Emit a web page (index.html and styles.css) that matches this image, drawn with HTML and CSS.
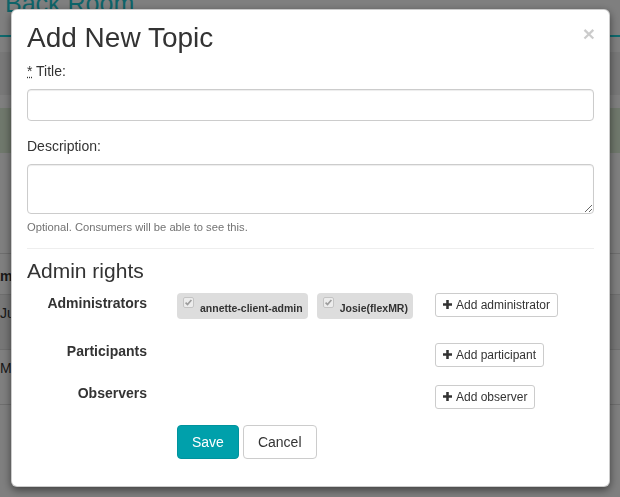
FILE: index.html
```html
<!DOCTYPE html>
<html lang="en">
<head>
    <meta charset="UTF-8">
    <meta name="viewport" content="width=device-width, initial-scale=1.0">
    <title>Back Room - Add New Topic</title>
    <link rel="stylesheet" href="styles.css">
</head>
<body>
    <div class="page">
        <h1 class="page-title">Back Room</h1>
        <div class="page-rule"></div>
        <div class="breadcrumb-bar"></div>
        <div class="notice"></div>
        <table class="topics">
            <thead>
                <tr><th><span class="cut">Name</span></th><th>Created</th></tr>
            </thead>
            <tbody>
                <tr class="striped"><td>June topic</td><td></td></tr>
                <tr><td>March topic</td><td></td></tr>
            </tbody>
        </table>
    </div>

    <div class="backdrop"></div>

    <div class="modal">
        <div class="modal-dialog">
            <div class="modal-header">
                <h4 class="modal-title">Add New Topic</h4>
                <button class="close" type="button">&times;</button>
            </div>
            <div class="modal-body">
                <div class="form-group">
                    <label for="title"><abbr title="required">*</abbr> Title:</label>
                    <input id="title" class="form-control" type="text">
                </div>
                <div class="form-group flush">
                    <label for="description">Description:</label>
                    <textarea id="description" class="form-control"></textarea>
                    <p class="help-block">Optional. Consumers will be able to see this.</p>
                </div>

                <hr>

                <h3 class="section-title">Admin rights</h3>

                <div class="admin-row">
                    <div class="row-label">Administrators</div>
                    <div class="chips">
                        <span class="chip">
                            <svg class="check" width="11" height="11" viewBox="0 0 11 11"><rect x="0.5" y="0.5" width="10" height="10" rx="1.5" fill="#ececec" stroke="#c4c4c4"/><path d="M2.6 5.6 L4.5 7.6 L8.4 2.9" fill="none" stroke="#9c9c9c" stroke-width="1.6"/></svg>
                            annette-client-admin
                        </span>
                        <span class="chip">
                            <svg class="check" width="11" height="11" viewBox="0 0 11 11"><rect x="0.5" y="0.5" width="10" height="10" rx="1.5" fill="#ececec" stroke="#c4c4c4"/><path d="M2.6 5.6 L4.5 7.6 L8.4 2.9" fill="none" stroke="#9c9c9c" stroke-width="1.6"/></svg>
                            Josie(flexMR)
                        </span>
                    </div>
                    <div><button class="btn-add" type="button"><svg width="9" height="9" viewBox="0 0 12 12"><path d="M4.3 0h3.4v4.3H12v3.4H7.7V12H4.3V7.7H0V4.3h4.3z" fill="#333"/></svg>Add administrator</button></div>
                </div>

                <div class="admin-row empty">
                    <div class="row-label">Participants</div>
                    <div class="chips"></div>
                    <div><button class="btn-add" type="button"><svg width="9" height="9" viewBox="0 0 12 12"><path d="M4.3 0h3.4v4.3H12v3.4H7.7V12H4.3V7.7H0V4.3h4.3z" fill="#333"/></svg>Add participant</button></div>
                </div>

                <div class="admin-row empty last">
                    <div class="row-label">Observers</div>
                    <div class="chips"></div>
                    <div><button class="btn-add" type="button"><svg width="9" height="9" viewBox="0 0 12 12"><path d="M4.3 0h3.4v4.3H12v3.4H7.7V12H4.3V7.7H0V4.3h4.3z" fill="#333"/></svg>Add observer</button></div>
                </div>

                <div class="form-actions">
                    <button class="btn btn-primary" type="button">Save</button>
                    <button class="btn btn-default" type="button">Cancel</button>
                </div>
            </div>
        </div>
    </div>
</body>
</html>
```

FILE: styles.css
```css
body {
    font-family: "Liberation Sans", Arial, Helvetica, sans-serif;
    font-size: 14px;
    line-height: 20px;
    color: #333;
    background-color: #fff;
    margin: 0;
    padding: 0;
    overflow: hidden;
}

/* page behind the dialog */
.page-title {
    margin: -9px 0 0;
    padding-left: 5px;
    font-size: 25px;
    line-height: 25px;
    font-weight: normal;
    color: #1cc8d2;
}

.page-rule {
    height: 2px;
    margin-top: 19px;
    background-color: #1cd4dc;
}

.breadcrumb-bar {
    height: 43px;
    margin-top: 15px;
    background-color: #f0f0f0;
}

.notice {
    height: 45px;
    margin-top: 13px;
    background-color: #dff0d8;
}

.topics {
    width: 100%;
    margin-top: 100px;
    border-collapse: collapse;
}

.topics th,
.topics td {
    border-top: 1px solid #ddd;
    border-bottom: 1px solid #ddd;
    text-align: left;
    vertical-align: top;
    padding: 0;
}

.topics th {
    height: 41px;
    padding-top: 12px;
    box-sizing: border-box;
}

.topics .cut {
    display: inline-block;
    text-indent: -18px;
}

.topics td {
    height: 55px;
    padding-top: 8px;
    box-sizing: border-box;
}

.topics tr.striped td {
    background-color: #eee;
}

.backdrop {
    position: fixed;
    top: 0;
    left: 0;
    right: 0;
    bottom: 0;
    background-color: rgba(0, 0, 0, 0.5);
}

/* dialog */
.modal {
    position: fixed;
    top: 0;
    left: 0;
    right: 0;
    bottom: 0;
}

.modal-dialog {
    margin: 9px 10px 0 11px;
    background-color: #fff;
    border: 1px solid rgba(0, 0, 0, 0.2);
    border-radius: 6px;
    box-shadow: 0 3px 9px rgba(0, 0, 0, 0.5);
}

.modal-header {
    display: flex;
    justify-content: space-between;
    align-items: flex-start;
    padding: 13px 15px 0;
}

.modal-title {
    margin: 0;
    font-size: 28px;
    font-weight: normal;
    line-height: 1.1;
}

.close {
    margin: 0 -1px 0 0;
    padding: 0;
    border: 0;
    background: none;
    font-family: inherit;
    font-size: 21px;
    font-weight: bold;
    line-height: 1;
    color: #000;
    opacity: 0.2;
    cursor: pointer;
}

.modal-body {
    padding: 7px 15px 27px;
}

.form-group {
    margin-bottom: 15px;
}

.form-group.flush {
    margin-bottom: 0;
}

label {
    display: block;
    margin-bottom: 8px;
}

abbr {
    cursor: help;
}

.form-control {
    display: block;
    width: 100%;
    height: 32px;
    box-sizing: border-box;
    padding: 6px 12px;
    font-family: inherit;
    font-size: 14px;
    color: #555;
    background-color: #fff;
    border: 1px solid #ccc;
    border-radius: 4px;
    box-shadow: inset 0 1px 1px rgba(0, 0, 0, 0.075);
}

textarea.form-control {
    height: 50px;
}

.help-block {
    margin: 5px 0 0;
    font-size: 11.2px;
    line-height: 16px;
    color: #737373;
}

hr {
    margin: 13px 0 10px;
    border: 0;
    border-top: 1px solid #eee;
}

.section-title {
    margin: 0 0 11px;
    font-size: 21px;
    font-weight: normal;
    line-height: 1.1;
}

.admin-row {
    display: grid;
    grid-template-columns: 150px 258px auto;
    align-items: start;
    margin-bottom: 18px;
}

.admin-row.last {
    margin-bottom: 16px;
}

.row-label {
    padding-right: 30px;
    text-align: right;
    font-weight: bold;
}

.admin-row.empty .row-label {
    margin-top: -2px;
}

.chips {
    display: flex;
    flex-wrap: wrap;
    column-gap: 9px;
}

.chip {
    display: flex;
    align-items: center;
    gap: 6px;
    height: 26px;
    box-sizing: border-box;
    margin-bottom: 6px;
    padding: 4px 5px 0 6px;
    background-color: #ddd;
    border-radius: 4px;
    font-size: 10.5px;
    font-weight: bold;
    color: #333;
}

.chip .check {
    align-self: flex-start;
}

.btn-add {
    display: inline-flex;
    align-items: center;
    gap: 4px;
    height: 24px;
    box-sizing: border-box;
    padding: 0 7px;
    background-color: #fff;
    border: 1px solid #ccc;
    border-radius: 3px;
    font-family: inherit;
    font-size: 12px;
    line-height: 18px;
    color: #333;
    cursor: pointer;
}

.form-actions {
    display: flex;
    gap: 4px;
    padding-left: 150px;
}

.btn {
    padding: 6px 14px;
    border: 1px solid transparent;
    border-radius: 4px;
    font-family: inherit;
    font-size: 14px;
    line-height: 20px;
    cursor: pointer;
}

.btn-primary {
    color: #fff;
    background-color: #00a0ab;
    border-color: #00939d;
}

.btn-default {
    color: #333;
    background-color: #fff;
    border-color: #ccc;
}
```
